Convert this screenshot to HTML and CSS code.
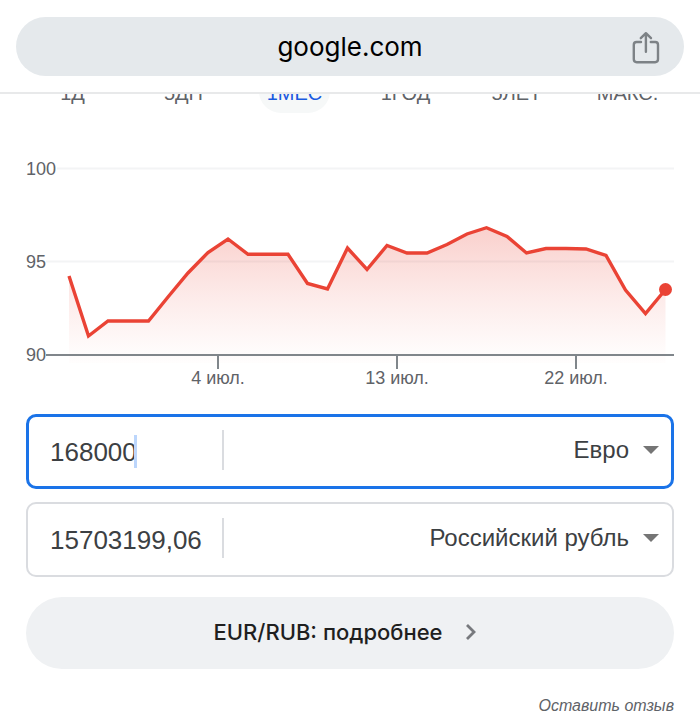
FILE: index.html
```
<!DOCTYPE html>
<html lang="ru">

<head>
    <meta charset="utf-8">
    <meta name="viewport" content="width=device-width, initial-scale=1">
    <title>google.com</title>
    <link rel="stylesheet" href="styles.css">
</head>

<body>
    <header class="topbar">
        <div class="address">
            <span class="host">google.com</span>
            <button class="share" aria-label="Поделиться">
                <svg width="28" height="34" viewBox="0 0 28 34" fill="none" stroke="#7d8286" stroke-width="2.4" stroke-linecap="round" stroke-linejoin="round">
                    <path d="M9 12H4.5Q1.8 12 1.8 14.7V29.3Q1.8 32.2 4.7 32.2H23.1Q26 32.2 26 29.3V14.7Q26 12 23.3 12H18.8" />
                    <path d="M13.9 21.8V3.2M8.8 8.2L13.9 3.2L19 8.2" />
                </svg>
            </button>
        </div>
    </header>

    <nav class="range">
        <div class="range-list">
            <button class="tab">1Д</button>
            <button class="tab">5ДН</button>
            <button class="tab active">1МЕС</button>
            <button class="tab">1ГОД</button>
            <button class="tab">5ЛЕТ</button>
            <button class="tab">МАКС.</button>
        </div>
    </nav>

    <main>
        <svg class="chart" viewBox="0 0 648 240" role="img" aria-label="EUR/RUB">
            <defs>
                <linearGradient id="fill" gradientUnits="userSpaceOnUse" x1="0" y1="78" x2="0" y2="213">
                    <stop offset="0" stop-color="#ea4335" stop-opacity="0.25" />
                    <stop offset="0.5" stop-color="#ea4335" stop-opacity="0.11" />
                    <stop offset="0.9" stop-color="#ea4335" stop-opacity="0.02" />
                    <stop offset="1" stop-color="#ea4335" stop-opacity="0.01" />
                </linearGradient>
            </defs>

            <!-- сетка -->
            <path class="grid" d="M31 18.5H648M20 111.5H648" />

            <!-- график -->
            <path fill="url(#fill)" d="M43 126L62.5 186L82 171H122.5L142 147L162 123L182 102.5L202 89L222 104.3H262L281.5 133.5L301.5 139L321.5 98L341 119.5L361 95.5L381 103H401L421 94.5L441 84L460.5 77.7L481 86.5L500.5 103L520 98.5H540L560 99L580 105.5L599.5 140L619.5 163.5L639.5 139.5V213H43Z" />
            <path class="line" d="M43 126L62.5 186L82 171H122.5L142 147L162 123L182 102.5L202 89L222 104.3H262L281.5 133.5L301.5 139L321.5 98L341 119.5L361 95.5L381 103H401L421 94.5L441 84L460.5 77.7L481 86.5L500.5 103L520 98.5H540L560 99L580 105.5L599.5 140L619.5 163.5L639.5 139.5" />
            <circle cx="639.5" cy="139.5" r="6.5" fill="#ea4335" />

            <!-- оси -->
            <path class="axis" d="M20 205H648M192 205V219M371 205V219M550 205V219" />
            <text x="0" y="25">100</text>
            <text x="0" y="118">95</text>
            <text x="0" y="211">90</text>
            <g text-anchor="middle">
                <text x="192" y="234">4 июл.</text>
                <text x="371" y="234">13 июл.</text>
                <text x="550" y="234">22 июл.</text>
            </g>
        </svg>

        <form class="converter">
            <div class="row focused">
                <div class="amount">
                    <input type="text" inputmode="decimal" aria-label="Сумма в евро" value="168000">
                    <span class="caret"></span>
                </div>
                <div class="currency">
                    <select aria-label="Исходная валюта">
                        <option>Евро</option>
                    </select>
                </div>
            </div>
            <div class="row">
                <div class="amount">
                    <input type="text" inputmode="decimal" aria-label="Сумма в рублях" value="15703199,06">
                </div>
                <div class="currency">
                    <select aria-label="Целевая валюта">
                        <option>Российский рубль</option>
                    </select>
                </div>
            </div>
        </form>

        <a class="more" href="#">
            EUR/RUB: подробнее
            <svg width="12" height="18" viewBox="0 0 12 18" fill="none" stroke="#77797d" stroke-width="2.8">
                <path d="M2 2L9 9L2 16" />
            </svg>
        </a>

        <a class="feedback" href="#">Оставить отзыв</a>
    </main>
</body>

</html>
```
FILE: styles.css
```
* {
    box-sizing: border-box;
}

body {
    margin: 0;
    background-color: #fff;
    font-family: "Liberation Sans", Arial, sans-serif;
    color: #3c4043;
}

button,
input,
select {
    font-family: inherit;
    color: inherit;
    border: none;
    background: none;
    margin: 0;
    padding: 0;
}

.topbar {
    padding: 17px 16px 16px;
    border-bottom: 2px solid #e8e9ea;
}

.address {
    display: grid;
    grid-template-columns: 28px 1fr 28px;
    align-items: center;
    height: 59px;
    padding: 0 24px;
    border-radius: 30px;
    background-color: #e5e9ec;
}

.host {
    grid-column: 2;
    text-align: center;
    font-family: Inter, sans-serif;
    font-size: 26px;
    color: #000;
}

.share {
    display: flex;
    cursor: pointer;
}

/* лента вкладок наполовину уходит под шапку */
.range {
    overflow: hidden;
    padding: 0 17px;
}

.range-list {
    display: flex;
    margin-top: -25px;
}

.tab {
    flex: 1;
    height: 44px;
    margin: 0 20px;
    padding-top: 4px;
    border-radius: 22px;
    font-size: 20px;
    color: #5f6368;
    white-space: nowrap;
    cursor: pointer;
}

.tab.active {
    background-color: #f6f8f8;
    color: #1a5ae0;
}

main {
    display: flex;
    flex-direction: column;
    padding: 37px 26px 0;
}

.chart {
    display: block;
    width: 100%;
}

.chart text {
    font-size: 18px;
    fill: #5f6368;
}

.grid {
    stroke: #f3f4f5;
    stroke-width: 2;
}

.axis {
    fill: none;
    stroke: #80868b;
    stroke-width: 2;
}

.line {
    fill: none;
    stroke: #ea4335;
    stroke-width: 3.4;
}

.converter {
    display: flex;
    flex-direction: column;
    gap: 13px;
    margin-top: 24px;
}

.row {
    display: flex;
    align-items: center;
    height: 75px;
    padding: 0 13px 4px 22px;
    border: 2px solid #dadce0;
    border-radius: 10px;
}

.row.focused {
    padding: 0 12px 4px 21px;
    border: 3px solid #1a73e8;
}

.amount {
    position: relative;
    flex: none;
    width: 174px;
    height: 40px;
    border-right: 2px solid #dadce0;
}

.amount input {
    width: 100%;
    height: 100%;
    padding-top: 6px;
    font-size: 26px;
    outline: none;
}

.caret {
    position: absolute;
    left: 84px;
    top: 5px;
    width: 3px;
    height: 33px;
    background-color: #bcd6fc;
}

.currency {
    position: relative;
    flex: 1;
}

.currency select {
    width: 100%;
    height: 40px;
    padding-right: 30px;
    font-size: 24px;
    text-align-last: right;
    appearance: none;
    outline: none;
    cursor: pointer;
}

.currency::after {
    content: "";
    position: absolute;
    right: 0;
    top: 16px;
    border: 8px solid transparent;
    border-top-color: #757575;
    border-bottom: none;
    pointer-events: none;
}

.more {
    display: flex;
    align-items: center;
    justify-content: center;
    gap: 22px;
    height: 72px;
    margin-top: 20px;
    padding: 0 10px 2px 0;
    border-radius: 36px;
    background-color: #eff1f3;
    font-family: Inter, sans-serif;
    font-size: 22px;
    font-weight: 500;
    color: #1f1f1f;
    text-decoration: none;
}

.feedback {
    align-self: flex-end;
    margin-top: 26px;
    font-size: 16px;
    line-height: 22px;
    font-style: italic;
    color: #5f6368;
    text-decoration: none;
}
```
